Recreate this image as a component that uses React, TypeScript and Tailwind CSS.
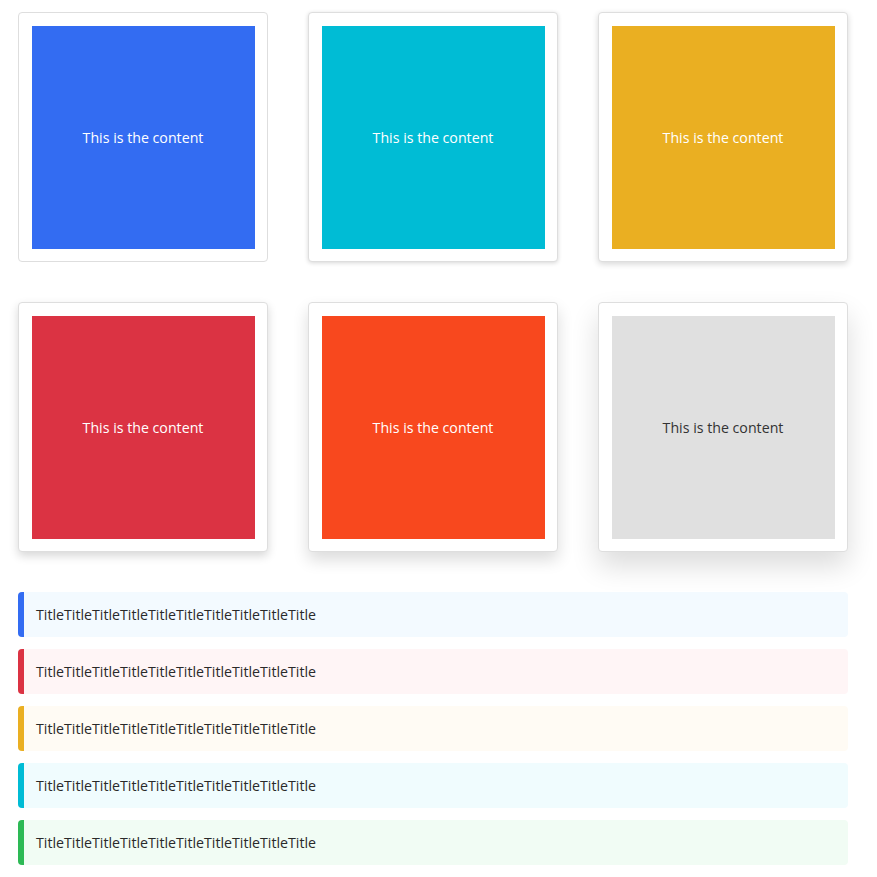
import React from 'react';

const cards = [
  { bg: 'bg-[#336cf2]', text: 'text-white', shadow: 'shadow-none' },
  { bg: 'bg-[#00bcd5]', text: 'text-white', shadow: 'shadow-[0_1px_4px_rgba(0,0,0,0.16)]' },
  { bg: 'bg-[#eaaf22]', text: 'text-white', shadow: 'shadow-[0_2px_6px_rgba(0,0,0,0.16)]' },
  { bg: 'bg-[#db3343]', text: 'text-white', shadow: 'shadow-[0_4px_10px_rgba(0,0,0,0.16)]' },
  { bg: 'bg-[#f8481e]', text: 'text-white', shadow: 'shadow-[0_8px_16px_rgba(0,0,0,0.14)]' },
  { bg: 'bg-[#e0e0e0]', text: 'text-[#333]', shadow: 'shadow-[0_14px_28px_rgba(0,0,0,0.14)]' },
];

const bars = [
  { border: 'border-l-[#336cf2]', bg: 'bg-[#f3faff]' },
  { border: 'border-l-[#db3343]', bg: 'bg-[#fff5f6]' },
  { border: 'border-l-[#eaaf22]', bg: 'bg-[#fffbf4]' },
  { border: 'border-l-[#00bcd5]', bg: 'bg-[#f0fcfe]' },
  { border: 'border-l-[#2db955]', bg: 'bg-[#f1fcf4]' },
];

const App: React.FC = () => {
  return (
    <div className="min-h-screen bg-white p-[18px] pt-3 font-['Open_Sans',sans-serif]">
      {/* Cards */}
      <div className="grid grid-cols-[250px_250px_250px] gap-x-10 gap-y-10">
        {cards.map((c, i) => (
          <div
            key={i}
            className={`w-[250px] h-[250px] p-[12.5px] bg-white border border-[#dedede] rounded ${c.shadow}`}
          >
            <div className={`w-full h-full flex items-center justify-center pt-0.5 text-[14.2px] ${c.bg} ${c.text}`}>
              This is the content
            </div>
          </div>
        ))}
      </div>

      {/* Title bars */}
      <div className="mt-10 w-[830px] flex flex-col gap-3">
        {bars.map((b, i) => (
          <div
            key={i}
            className={`h-[45px] flex items-center pl-3 rounded border-l-[6px] ${b.border} ${b.bg} text-[14.2px] text-[#2a2a2a]`}
          >
            TitleTitleTitleTitleTitleTitleTitleTitleTitleTitle
          </div>
        ))}
      </div>
    </div>
  );
};

export default App;
